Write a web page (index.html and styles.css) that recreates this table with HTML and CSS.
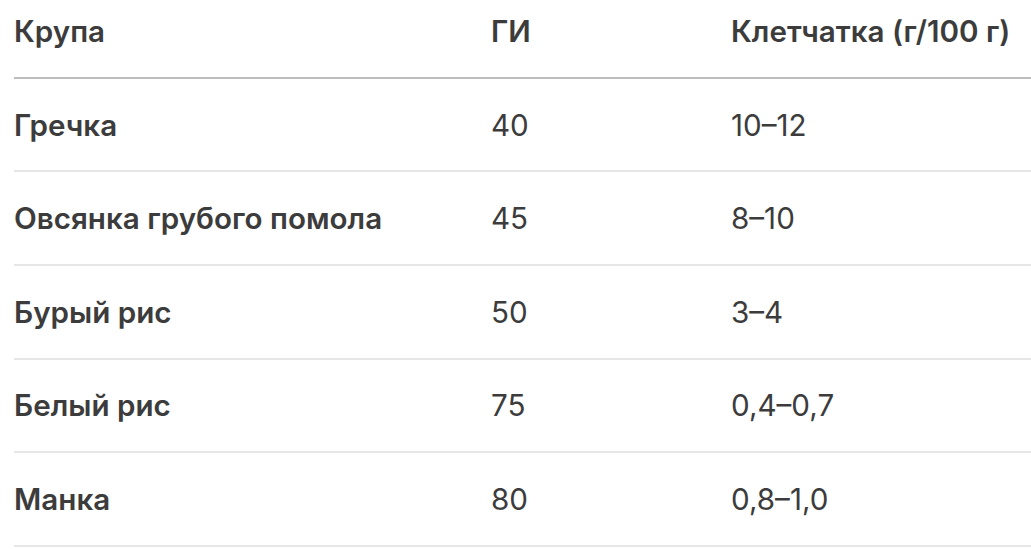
FILE: index.html
```html
<!DOCTYPE html>
<html lang="ru">
<head>
<meta charset="utf-8">
<link rel="stylesheet" href="styles.css">
</head>
<body>
<div class="wrap">
<table class="grain">
  <colgroup>
    <col class="c1"><col class="c2"><col class="c3">
  </colgroup>
  <thead>
    <tr><th>Крупа</th><th>ГИ</th><th>Клетчатка (г/100 г)</th></tr>
  </thead>
  <tbody>
    <tr><td class="name">Гречка</td><td>40</td><td>10–12</td></tr>
    <tr><td class="name">Овсянка грубого помола</td><td>45</td><td>8–10</td></tr>
    <tr><td class="name">Бурый рис</td><td>50</td><td>3–4</td></tr>
    <tr><td class="name">Белый рис</td><td>75</td><td>0,4–0,7</td></tr>
    <tr><td class="name">Манка</td><td>80</td><td>0,8–1,0</td></tr>
  </tbody>
</table>
</div>
</body>
</html>
```
FILE: styles.css
```css
html, body {
  margin: 0;
  padding: 0;
  background: #ffffff;
  overflow: hidden;
}
.wrap {
  padding-left: 14px;
}
.grain {
  border-collapse: collapse;
  width: 100%;
  font-family: Inter, "Noto Sans", sans-serif;
  font-size: 29.6px;
  line-height: 34px;
  color: #3c3c3c;
}
.c1 { width: 477px; }
.c2 { width: 240px; }
th, td {
  text-align: left;
  padding: 28.8px 0 28.8px 0;
  white-space: nowrap;
}
th {
  font-weight: 600;
  padding-top: 14px;
  border-bottom: 2px solid #bdbdbd;
}
td {
  font-weight: 400;
  border-bottom: 2px solid #e6e6e6;
}
td.name {
  font-weight: 600;
}
```
